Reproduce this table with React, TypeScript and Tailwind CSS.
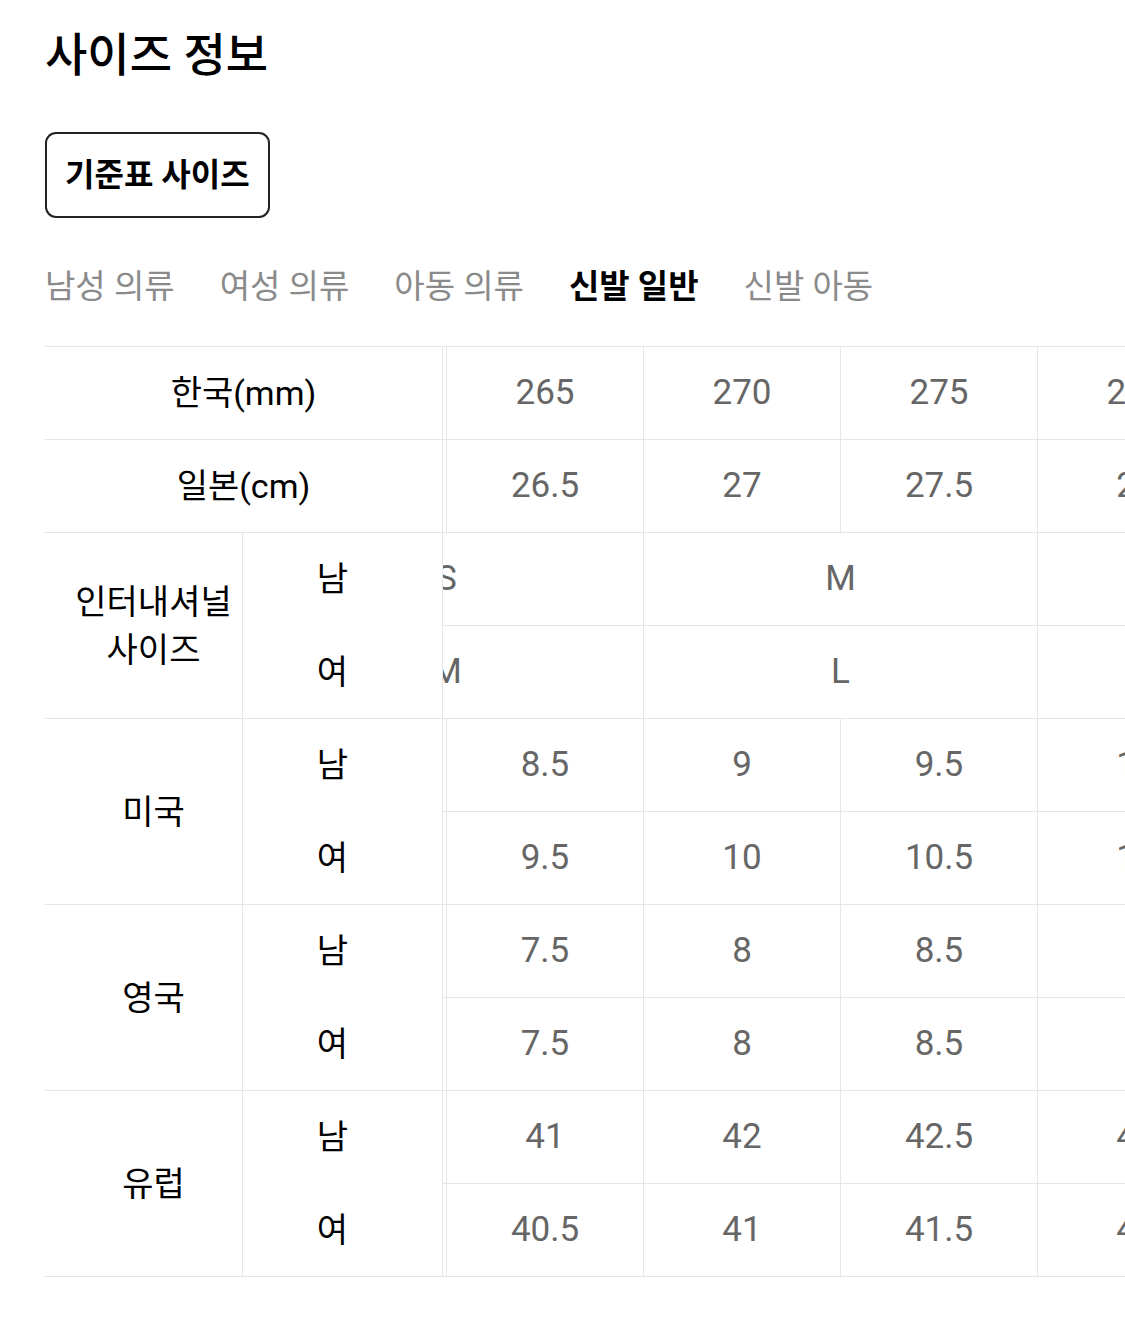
import React, { useLayoutEffect, useRef } from 'react';

const FONT = { fontFamily: '"Roboto", "Noto Sans CJK KR", sans-serif' };

type Col = {
  mm: string;
  jp: string;
  usM: string;
  usW: string;
  ukM: string;
  ukW: string;
  euM: string;
  euW: string;
};

const COLUMNS: Col[] = [
  { mm: '250', jp: '25', usM: '7', usW: '8', ukM: '6', ukW: '6', euM: '39', euW: '39' },
  { mm: '255', jp: '25.5', usM: '7.5', usW: '8.5', ukM: '6.5', ukW: '6.5', euM: '40', euW: '39.5' },
  { mm: '260', jp: '26', usM: '8', usW: '9', ukM: '7', ukW: '7', euM: '40.5', euW: '40' },
  { mm: '265', jp: '26.5', usM: '8.5', usW: '9.5', ukM: '7.5', ukW: '7.5', euM: '41', euW: '40.5' },
  { mm: '270', jp: '27', usM: '9', usW: '10', ukM: '8', ukW: '8', euM: '42', euW: '41' },
  { mm: '275', jp: '27.5', usM: '9.5', usW: '10.5', ukM: '8.5', ukW: '8.5', euM: '42.5', euW: '41.5' },
  { mm: '280', jp: '28', usM: '10', usW: '11', ukM: '9', ukW: '9', euM: '43', euW: '42' },
  { mm: '285', jp: '28.5', usM: '10.5', usW: '11.5', ukM: '9.5', ukW: '9.5', euM: '44', euW: '42.5' },
  { mm: '290', jp: '29', usM: '11', usW: '12', ukM: '10', ukW: '10', euM: '44.5', euW: '43' },
];

// international sizes cover two mm columns each
const INTL_MEN = ['XS', 'S', 'M', 'L', 'XL'];
const INTL_WOMEN = ['S', 'M', 'L', 'XL', 'XXL'];

const TABS = ['남성 의류', '여성 의류', '아동 의류', '신발 일반', '신발 아동'];

const cell = 'h-[93px] w-[197px] shrink-0 flex items-center justify-center border-r border-b border-[#e6e6e6] text-[35px] text-[#666]';
const wideCell = 'h-[93px] w-[394px] shrink-0 flex items-center justify-center border-r border-b border-[#e6e6e6] text-[35px] text-[#666]';

function ValueRow({ field }: { field: keyof Col }) {
  return (
    <div className="flex">
      {COLUMNS.map((c) => (
        <div key={c.mm} className={cell}>
          {c[field]}
        </div>
      ))}
    </div>
  );
}

function IntlRow({ sizes }: { sizes: string[] }) {
  return (
    <div className="flex">
      {sizes.slice(0, Math.ceil(COLUMNS.length / 2)).map((s) => (
        <div key={s} className={wideCell}>
          {s}
        </div>
      ))}
    </div>
  );
}

function GroupLabel({ label, lines }: { label?: string; lines?: string[] }) {
  return (
    <div className="flex h-[186px] border-b border-[#e6e6e6]">
      <div className="w-[198px] border-r border-[#e6e6e6] flex flex-col items-center justify-center pl-[20px] text-[34px] leading-[48px] text-black">
        {lines ? lines.map((l) => <span key={l}>{l}</span>) : label}
      </div>
      <div className="flex-1 flex flex-col pr-[20px] text-[34px] leading-[48px] text-black">
        <div className="flex-1 flex items-center justify-center">남</div>
        <div className="flex-1 flex items-center justify-center">여</div>
      </div>
    </div>
  );
}

export default function App() {
  const scrollRef = useRef<HTMLDivElement>(null);

  useLayoutEffect(() => {
    // 265 column lines up right after the fixed header column
    if (scrollRef.current) scrollRef.current.scrollLeft = 197 * 3 - 4;
  }, []);

  return (
    <div className="min-h-[1320px] bg-white pt-[24px]" style={FONT}>
      <h1 className="pl-[45px] text-[46px] font-medium leading-[62px] text-black">사이즈 정보</h1>

      <div className="pl-[45px] mt-[46px]">
        <button className="h-[86px] px-[18px] rounded-[11px] border-2 border-[#222] text-[32px] font-bold text-black">
          기준표 사이즈
        </button>
      </div>

      <div className="pl-[45px] mt-[47px] flex gap-[45px] text-[33px] leading-[44px]">
        {TABS.map((t) => (
          <span key={t} className={t === '신발 일반' ? 'font-bold text-black' : 'text-[#8a8a8a]'}>
            {t}
          </span>
        ))}
      </div>

      <div className="ml-[45px] mt-[37px] flex border-t border-[#e6e6e6]">
        <div className="w-[398px] shrink-0 border-r border-[#e6e6e6]">
          <div className="h-[93px] border-b border-[#e6e6e6] flex items-center justify-center text-[34px] text-black">
            한국(mm)
          </div>
          <div className="h-[93px] border-b border-[#e6e6e6] flex items-center justify-center text-[34px] text-black">
            일본(cm)
          </div>
          <GroupLabel lines={['인터내셔널', '사이즈']} />
          <GroupLabel label="미국" />
          <GroupLabel label="영국" />
          <GroupLabel label="유럽" />
        </div>

        <div ref={scrollRef} className="flex-1 overflow-hidden">
          <div className="w-max">
            <ValueRow field="mm" />
            <ValueRow field="jp" />
            <IntlRow sizes={INTL_MEN} />
            <IntlRow sizes={INTL_WOMEN} />
            <ValueRow field="usM" />
            <ValueRow field="usW" />
            <ValueRow field="ukM" />
            <ValueRow field="ukW" />
            <ValueRow field="euM" />
            <ValueRow field="euW" />
          </div>
        </div>
      </div>
    </div>
  );
}
